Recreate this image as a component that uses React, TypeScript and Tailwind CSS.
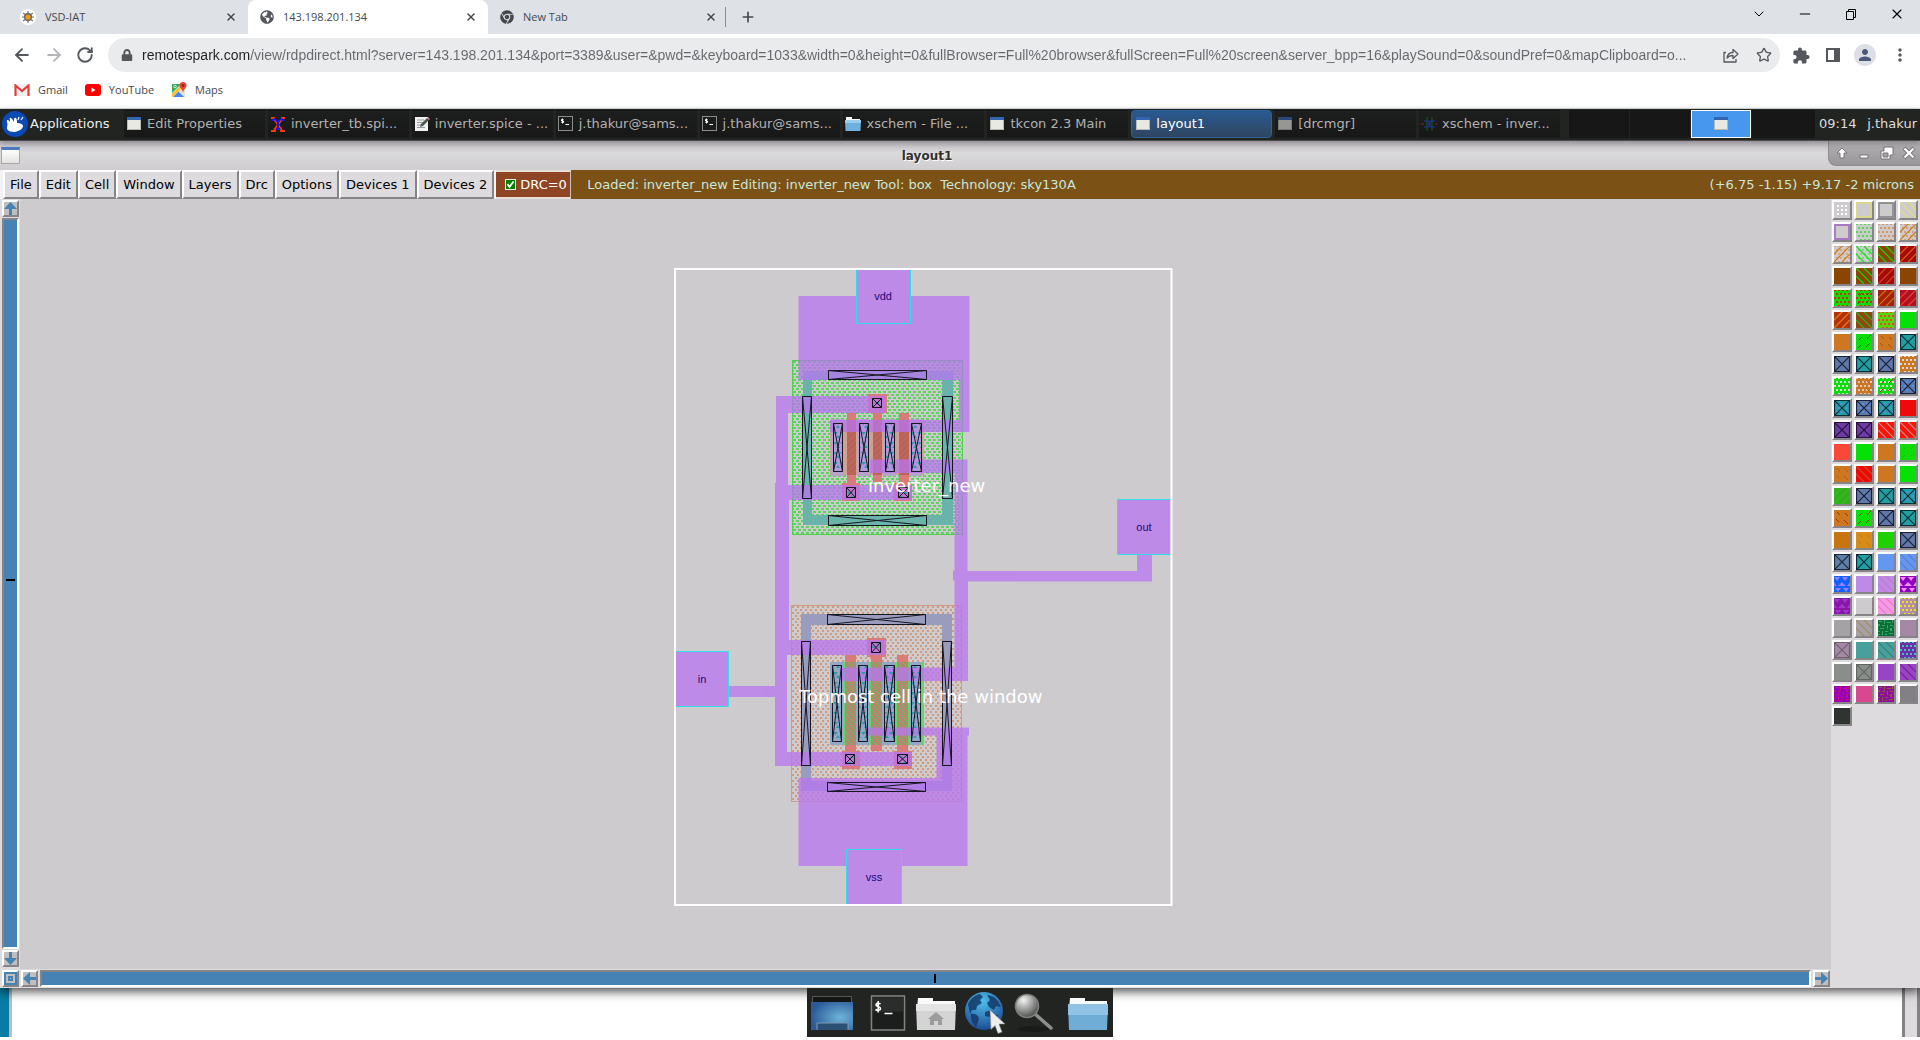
import React from "react";
import { X, Plus, ArrowLeft, ArrowRight, RotateCw, ChevronDown, Star, Minus } from "lucide-react";
import { FaChrome, FaGlobeAmericas, FaLock } from "react-icons/fa";
import { MdMoreVert, MdPerson } from "react-icons/md";

const URL_TEXT =
  "remotespark.com/view/rdpdirect.html?server=143.198.201.134&port=3389&user=&pwd=&keyboard=1033&width=0&height=0&fullBrowser=Full%20browser&fullScreen=Full%20screen&server_bpp=16&playSound=0&soundPref=0&mapClipboard=o...";

/* ---------- Browser ---------- */

function BugIcon() {
  return (
    <svg viewBox="0 0 16 16" className="size-4">
      <circle cx="8" cy="8" r="8" fill="#fff" />
      <path d="M3 4l3 2M13 4l-3 2M2 8h3M14 8h-3M3 12l3-2M13 12l-3-2M8 2v2M8 14v-2" stroke="#7a7468" strokeWidth="1.2" />
      <circle cx="8" cy="8" r="4.200" fill="#6b6a66" />
      <circle cx="8" cy="8" r="2.6" fill="#f09a1c" />
    </svg>
  );
}

function Tab({ icon, title, active }: { icon: React.ReactNode; title: string; active?: boolean }) {
  return (
    <div
      className={
        active
          ? "flex h-full w-60 items-center gap-[9px] rounded-t-lg bg-white pl-3 pr-[9px] text-[#45494d]"
          : "flex h-full w-60 items-center gap-[9px] pl-3 pr-[9px] text-[#45494d]"
      }
    >
      {icon}
      <button className="flex-1 truncate text-left text-[11px]">{title}</button>
      <button aria-label={"Close " + title} className="flex size-4 items-center justify-center">
        <X className="size-3" strokeWidth={3} />
      </button>
    </div>
  );
}

function Browser() {
  return (
    <header className="bg-white font-['Open_Sans',sans-serif] text-[#45494d]">
      <div className="flex h-[34px] items-center bg-[#dee1e6] pl-2">
        <Tab icon={<BugIcon />} title="VSD-IAT" />
        <Tab active icon={<FaGlobeAmericas className="size-[14px] text-[#54585d]" />} title="143.198.201.134" />
        <Tab icon={<FaChrome className="size-[14px] text-[#45494d]" />} title="New Tab" />
        <div className="-ml-[3px] h-5 w-px bg-[#8a8d91]" />
        <button aria-label="New tab" className="ml-3 flex size-5 items-center justify-center">
          <Plus className="size-4" strokeWidth={2.5} />
        </button>
        <div className="ml-auto flex h-full items-center gap-[30px] pb-[6px] pr-[15px] text-black">
          <button aria-label="Search tabs"><ChevronDown className="size-4" strokeWidth={1.5} /></button>
          <button aria-label="Minimize">
            <Minus className="size-4" strokeWidth={1.8} />
          </button>
          <button aria-label="Restore">
            <svg viewBox="0 0 16 16" className="size-4" fill="none" stroke="#000">
              <path d="M3.500 5.500h7v8h-7zM5.500 5v-1.500h7v8h-1.500" />
            </svg>
          </button>
          <button aria-label="Close"><X className="size-4" strokeWidth={1.6} /></button>
        </div>
      </div>
      <div className="flex h-[42px] items-center pl-3 pr-[10px]">
        <div className="flex w-24 items-center gap-3 text-[#54585d]">
          <button aria-label="Back"><ArrowLeft className="size-5" strokeWidth={2.3} /></button>
          <button aria-label="Forward" className="text-[#b4b6b9]"><ArrowRight className="size-5" strokeWidth={2.3} /></button>
          <button aria-label="Reload"><RotateCw className="size-[18px]" strokeWidth={2.5} /></button>
        </div>
        <div className="flex h-[34px] flex-1 items-center rounded-full bg-[#e9ebed] pl-[13px] pr-2">
          <FaLock className="size-3 shrink-0 text-[#54585d]" />
          <input
            aria-label="Address"
            readOnly
            value={URL_TEXT}
            className="ml-[9px] min-w-0 flex-1 bg-[linear-gradient(90deg,#202124_108px,#64686c_108px)] bg-clip-text font-['Liberation_Sans',sans-serif] text-[14px] text-transparent outline-none"
          />
          <div className="flex items-center gap-4 text-[#54585d]">
            <button aria-label="Share">
              <svg viewBox="0 0 18 18" className="size-[18px]" fill="none" stroke="currentColor" strokeWidth="1.3">
                <path d="M4 6.500H2v9.500h12v-3M5 12c.5-4 3-5.500 6-5.500V3.500l5 4.500-5 4.500V9.500c-3 0-4.500.5-6 2.500z" strokeLinejoin="round" />
              </svg>
            </button>
            <button aria-label="Bookmark"><Star className="size-4" strokeWidth={2} /></button>
          </div>
        </div>
        <div className="ml-[13px] flex items-center gap-[14px] text-[#54585d]">
          <button aria-label="Extensions">
            <svg viewBox="0 0 22 22" className="size-[17px]" fill="currentColor">
              <path d="M19 10.500h-1.500v-4c0-1.100-.9-2-2-2h-4V3a2.500 2.500 0 0 0-5 0v1.500h-4c-1.100 0-2 .9-2 2v3.800H2a2.700 2.700 0 0 1 0 5.400H.5v3.800c0 1.100.9 2 2 2h3.800V20a2.700 2.700 0 0 1 5.400 0v1.500h3.800c1.100 0 2-.9 2-2v-4H19a2.500 2.500 0 0 0 0-5z" />
            </svg>
          </button>
          <button aria-label="Side panel" className="ml-[2px] flex h-[14px] w-[14px] border-2 border-[#54585d]">
            <span className="ml-auto h-full w-1 bg-[#54585d]" />
          </button>
          <button aria-label="Profile" className="flex size-[22px] items-center justify-center rounded-full bg-[#dcdfe5] text-[#4a5a78]">
            <MdPerson className="size-[18px]" />
          </button>
          <button aria-label="Menu"><MdMoreVert className="size-5" /></button>
        </div>
      </div>
      <nav aria-label="Bookmarks" className="flex h-[33px] items-center gap-[17px] border-b border-[#d5dede] pb-1 pl-[14px] text-[11px]">
        <a href="#gmail" className="flex items-center gap-2">
          <svg viewBox="0 0 16 12" className="h-3 w-4">
            <rect x="1" width="14" height="12" rx="1" fill="#f1efef" />
            <path d="M1.500 12V1.500L8 7l6.500-5.500V12" fill="none" stroke="#dd4038" strokeWidth="2.200" />
          </svg>
          Gmail
        </a>
        <a href="#youtube" className="flex items-center gap-2">
          <svg viewBox="0 0 16 12" className="h-3 w-4"><rect width="16" height="12" rx="3" fill="#f00" /><path d="M6.500 3.500v5l4-2.500z" fill="#fff" /></svg>
          YouTube
        </a>
        <a href="#maps" className="flex items-center gap-2">
          <svg viewBox="0 0 16 16" className="size-4">
            <path d="M1 2h13v13H1z" fill="#e3e3e3" />
            <path d="M1 2h9L1 11z" fill="#34a853" />
            <path d="M2 15l5.500-5.500L13 15z" fill="#4285f4" />
            <path d="M1 12l9-9 1 3-9 9H1z" fill="#fbc02d" />
            <circle cx="4" cy="4.500" r="1.300" fill="none" stroke="#fff" strokeWidth=".8" />
            <path d="M12 0a3.500 3.500 0 0 1 3.500 3.500C15.500 6 12.500 7 12 11c-.5-4-3.500-5-3.500-7.500A3.500 3.500 0 0 1 12 0z" fill="#ea4335" />
            <circle cx="12" cy="3.500" r="1.300" fill="#8c1d18" />
          </svg>
          Maps
        </a>
      </nav>
    </header>
  );
}

/* ---------- Desktop panel ---------- */

function WindowIcon({ dim }: { dim?: boolean }) {
  return (
    <svg viewBox="0 0 14 13" className={dim ? "h-[13px] w-[14px] shrink-0 opacity-60" : "h-[13px] w-[14px] shrink-0"}>
      <rect width="14" height="13" fill="#e9e9e4" />
      <rect width="14" height="3" fill="#3465b0" />
      <path d="M.5 3v9.500h13V3" fill="none" stroke="#b9b9b4" />
    </svg>
  );
}

function TerminalIcon() {
  return (
    <svg viewBox="0 0 15 15" className="size-[15px] shrink-0">
      <rect x=".5" y=".5" width="14" height="14" fill="#1a1c1b" stroke="#8b8d8b" />
      <path d="M5.500 3.500H3.500v1.500h2v1.500h-2M4.500 2.500v5M7.500 8.500h3.500" stroke="#fff" fill="none" />
    </svg>
  );
}

function FolderIcon() {
  return (
    <svg viewBox="0 0 16 14" className="h-[14px] w-4 shrink-0">
      <path d="M1 0h6v2h8v3H1z" fill="#f4f6f8" />
      <path d="M0 3h16l-.5 11H.5z" fill="#6fb0dc" />
      <path d="M0 3h16v3H0z" fill="#9ccbec" />
    </svg>
  );
}

function XtermIcon() {
  return (
    <svg viewBox="0 0 16 16" className="size-4 shrink-0" strokeWidth="2" fill="none">
      <path d="M3 2l9 12M13 2L4 14M1 15h5M10 15h5M1 2h4M11 2h4" stroke="#f63a08" />
      <path d="M2 5c1-2 3-2 4-1M14 5c-1-2-3-2-4-1M8 4v9M6 13h4M6 5h4" stroke="#1414f0" />
    </svg>
  );
}

function EditorIcon() {
  return (
    <svg viewBox="0 0 16 16" className="size-4 shrink-0">
      <rect x="1" y="1" width="13" height="14" fill="#f1f1ef" />
      <path d="M3 4h7M3 6.500h7M3 9h4M3 11.500h8" stroke="#99a" />
      <path d="M6 11l1-3 6-6 2 2-6 6z" fill="#4c5a4c" />
      <path d="M13 2l1-1 2 2-1 1z" fill="#f070a0" />
    </svg>
  );
}

function SchemIcon() {
  return (
    <svg viewBox="0 0 16 16" className="size-4 shrink-0" fill="none">
      <path d="M6 1v14M11 1v14" stroke="#1b5c26" />
      <path d="M3 5h5v6H3M9 5h5M9 11h5M9 5v6" stroke="#203890" />
      <path d="M0 8h3M14 8h2" stroke="#902020" />
    </svg>
  );
}

const TASKS: { icon: React.ReactNode; title: string; active?: boolean }[] = [
  { icon: <WindowIcon />, title: "Edit Properties" },
  { icon: <XtermIcon />, title: "inverter_tb.spi..." },
  { icon: <EditorIcon />, title: "inverter.spice - ..." },
  { icon: <TerminalIcon />, title: "j.thakur@sams..." },
  { icon: <TerminalIcon />, title: "j.thakur@sams..." },
  { icon: <FolderIcon />, title: "xschem - File ..." },
  { icon: <WindowIcon />, title: "tkcon 2.3 Main" },
  { icon: <WindowIcon />, title: "layout1", active: true },
  { icon: <WindowIcon dim />, title: "[drcmgr]" },
  { icon: <SchemIcon />, title: "xschem - inver..." },
];

function Panel() {
  return (
    <div className="relative flex h-8 items-center border-b border-[#4c4c4c] bg-[#222422] pb-[2px] text-[13px] text-[#b2b2b2] shadow-[0_2px_6px_rgba(80,70,80,0.5)]">
      <button className="flex w-[124px] items-center gap-[2px] pl-[2px] text-[#eee]">
        <svg viewBox="0 0 26 26" className="size-[26px]">
          <circle cx="13" cy="13" r="13" fill="#0b49b4" />
          <path d="M5 11c-1-3 2-2 3 0 0-3-1-5 1-4s2 3 3 4c0-3 0-5 2-4 1 1 1 3 1 5 3 0 6 1 6 3 0 3-4 5-8 6-4 0-8-1-8-4 0-2 1-4 0-6z" fill="#fff" />
          <path d="M16 9l1-3M19 9l2-3" stroke="#fff" strokeWidth="1.200" />
        </svg>
        Applications
      </button>
      <div className="grid h-7 min-w-0 flex-1 grid-cols-10 gap-[3px]">
        {TASKS.map((t, i) => (
          <button
            key={i}
            className={
              t.active
                ? "flex min-w-0 items-center gap-[5px] rounded-sm border border-[#2f6096] bg-linear-to-b from-[#285a92] to-[#2f4560] pl-[3px] text-white"
                : "flex min-w-0 items-center gap-[5px] border border-transparent bg-linear-to-b from-[#1d1f1e] to-[#171717] pl-px"
            }
          >
            <span className="flex w-4 shrink-0 justify-center">{t.icon}</span>
            <span className="whitespace-nowrap">{t.title}</span>
          </button>
        ))}
      </div>
      <div className="ml-[9px] flex h-7 gap-px">
        <button aria-label="Workspace 1" className="w-[60px] bg-[#171717]" />
        <button aria-label="Workspace 2" className="w-[60px] bg-[#171717]" />
        <button aria-label="Workspace 3" className="flex w-[60px] items-center justify-center border border-white bg-[#4797ef]">
          <WindowIcon />
        </button>
        <button aria-label="Workspace 4" className="w-[63px] bg-[#171717]" />
      </div>
      <div className="flex h-full w-[105px] items-center justify-between pl-1 pr-[3px] text-[#ddd]">
        <time>09:14</time>
        <span>j.thakur</span>
      </div>
    </div>
  );
}

/* ---------- Layout window ---------- */

function TitleBar() {
  return (
    <div className="flex h-[29px] items-start bg-linear-to-b from-[#c2c0c4] via-[#dad9db] via-40% to-[#cfcdcf]">
      <button aria-label="Window menu" className="mt-[6px] ml-px h-[17px] w-[19px] border border-[#a9a9a9] border-t-[3px] border-t-[#4f7cc0] bg-linear-to-b from-white to-[#e2e2de]" />
      <h1 className="flex-1 pl-[6px] pt-[7px] text-center text-[12px] leading-4 font-bold text-[#303030] [text-shadow:1px_1px_0_#fff]">layout1</h1>
      <div className="flex h-[25px] w-[92px] items-center justify-between rounded-bl-lg border-b border-l border-[#8d8d8d] bg-linear-to-b from-[#b5b3b5] to-[#989698] pl-[6px] pr-1">
        <button aria-label="Shade">
          <svg viewBox="0 0 14 14" className="size-[14px]"><path d="M7 2l5 5H9v5H5V7H2z" fill="#fff" stroke="#777" /></svg>
        </button>
        <button aria-label="Minimize">
          <svg viewBox="0 0 14 14" className="size-[14px]"><path d="M3 9h8v3H3z" fill="#fff" stroke="#777" /></svg>
        </button>
        <button aria-label="Maximize">
          <svg viewBox="0 0 14 14" className="size-[14px]"><path d="M4 1h9v8h-3v4H1V5h3zM3 7v4h5V7z" fill="#fff" fillRule="evenodd" stroke="#777" /></svg>
        </button>
        <button aria-label="Close">
          <svg viewBox="0 0 14 14" className="size-[14px]"><path d="M2 2l10 10M12 2L2 12" stroke="#777" strokeWidth="4" /><path d="M2.500 2.500l9 9M11.500 2.500l-9 9" stroke="#fff" strokeWidth="2.200" /></svg>
        </button>
      </div>
    </div>
  );
}

const MENUS = ["File", "Edit", "Cell", "Window", "Layers", "Drc", "Options", "Devices 1", "Devices 2"];

function MenuBar() {
  return (
    <div className="flex h-[29px] items-stretch bg-[#7b5115] pr-[6px] text-[13px] text-black">
      <div className="flex bg-[#f4f3f4] pr-[2px] pl-[3px]">
        {MENUS.map((m) => (
          <button key={m} className="whitespace-nowrap border-2 border-t-white border-r-[#868486] border-b-[#868486] border-l-white bg-[#dddbde] px-[5px]">
            {m}
          </button>
        ))}
      </div>
      <label className="flex w-[75px] shrink-0 items-center gap-1 border-2 border-r border-l-0 border-[#eadfd8] border-r-[#cfc3b8] bg-[#8e4523] pl-[9px] text-white">
        <span className="relative flex size-[11px] shrink-0">
          <input type="checkbox" defaultChecked className="size-[11px] appearance-none border border-[#e8e8e8] bg-[#008200]" />
          <svg viewBox="0 0 11 11" className="pointer-events-none absolute inset-0 size-[11px]"><path d="M2.500 5l2 3 4-5.500" fill="none" stroke="#fff" strokeWidth="1.800" /></svg>
        </span>
        DRC=0
      </label>
      <p className="flex flex-1 items-center pl-4 whitespace-pre text-[#c9e6dc]">Loaded: inverter_new Editing: inverter_new Tool: box  Technology: sky130A</p>
      <p className="flex items-center text-[#c9e6dc]">(+6.75 -1.15) +9.17 -2 microns</p>
    </div>
  );
}

function ScrollButton({ label, d }: { label: string; d: string }) {
  return (
    <button aria-label={label} className="size-[17px] shrink-0 border-2 border-t-white border-r-[#868486] border-b-[#868486] border-l-white bg-[#c0bebf]">
      <svg viewBox="0 0 13 13" className="size-[13px]" fill="#4682b4"><path d={d} fillRule="evenodd" /></svg>
    </button>
  );
}

/* Boxes crossed corner to corner: [x, y, width, height] */
type Box = [number, number, number, number];

const UPPER_TAPS: Box[] = [[828, 370, 98, 9], [828, 515, 98, 10], [802, 396, 9, 102], [942, 396, 10, 102]];
const LOWER_TAPS: Box[] = [[827, 614, 98, 10], [827, 782, 98, 9], [801, 641, 9, 124], [942, 641, 9, 124]];
const UPPER_CUTS: Box[] = [[833, 423, 9, 48], [859, 423, 9, 48], [885, 423, 9, 48], [911, 423, 10, 48]];
const LOWER_CUTS: Box[] = [[832, 665, 9, 76], [858, 665, 9, 76], [884, 665, 10, 76], [911, 665, 9, 76]];
const GATE_CUTS: Box[] = [[872, 398, 9, 9], [846, 487, 9, 10], [898, 487, 10, 10], [871, 642, 9, 10], [845, 754, 9, 9], [897, 754, 10, 9]];

function Crossed({ box: [x, y, w, h] }: { box: Box }) {
  return (
    <path
      d={`M${x + 0.5} ${y + 0.5}h${w}v${h}h${-w}zl${w} ${h}m0 ${-h}l${-w} ${h}`}
      fill="none"
      stroke="#161620"
      strokeWidth="1"
    />
  );
}

const PINS = [
  { name: "vdd", x: 856.5, y: 270, w: 54, h: 53.5, tx: 883, ty: 300, d: "M856.500 270v53.500h54V270" },
  { name: "out", x: 1117.5, y: 499.5, w: 53, h: 55, tx: 1144, ty: 531, d: "M1171 499.500h-53.500v55H1171" },
  { name: "in", x: 676, y: 651.5, w: 52.5, h: 55, tx: 702, ty: 683, d: "M676 651.500h52.500v55H676" },
  { name: "vss", x: 846.5, y: 849.5, w: 55, h: 55, tx: 874, ty: 881, d: "M846.500 904v-54.500h55V904" },
];

function Drawing() {
  return (
    <svg viewBox="674 268 503 638" className="h-[638px] w-[503px] shrink-0" role="img" aria-label="inverter_new layout">
      <defs>
        <pattern id="well" x="793" y="361" width="5" height="6" patternUnits="userSpaceOnUse" shapeRendering="crispEdges">
          <path d="M0 0h3v2H0zM3 3h2v2H3zM0 3h1v2H0z" fill="#5ad45c" />
        </pattern>
        <pattern id="sub" x="792" y="606" width="5" height="6" patternUnits="userSpaceOnUse" shapeRendering="crispEdges">
          <path d="M0 0h2v2H0zM3 3h2v2H3z" fill="#cf9c80" />
        </pattern>
        <pattern id="gateP" width="6" height="6" patternUnits="userSpaceOnUse"><path d="M0 6L6 0" stroke="#c07850" strokeWidth=".8" /></pattern>
        <pattern id="gateN" width="6" height="6" patternUnits="userSpaceOnUse"><path d="M0 0L6 6" stroke="#5fc850" strokeWidth=".8" /></pattern>
        <pattern id="cut" width="7" height="10" patternUnits="userSpaceOnUse"><path d="M0 2h5l-2.500 3zM3 8h4L5 5z" fill="#2f9aa8" /></pattern>
      </defs>

      {/* wells */}
      <rect x="792.500" y="360.500" width="170" height="174" fill="url(#well)" stroke="#4fd052" />
      <rect x="791.500" y="605.500" width="170" height="196" fill="url(#sub)" stroke="#cf9c82" />

      {/* guard rings */}
      <path fillRule="evenodd" fill="#69b3ab" d="M803 371h150v154H803zM812 380v135h130V380z" />
      <path fillRule="evenodd" fill="#9a9cbe" d="M801 614h151v177H801zM811 625v156h131V625z" />

      {/* diffusion */}
      <rect x="830" y="420" width="94" height="55" fill="#cfa093" />
      <rect x="830" y="662" width="94" height="83" fill="#5fd865" />
      {UPPER_CUTS.map(([x], i) => <rect key={i} x={x - 2} y="419" width="13" height="57" fill="#b5a3cc" />)}
      {LOWER_CUTS.map(([x], i) => <rect key={i} x={x - 2} y="662" width="13" height="83" fill="#93a7c6" />)}

      {/* polysilicon */}
      <g fill="#d97c79">
        <path d="M847 413h9v72h-9zM873 411h9v71h-9zM899 413h10v72h-10zM868 394h19v19h-19zM842 483h18v18h-18zM894 483h18v18h-18z" />
        <path d="M845 655h11v97h-11zM871 655h11v96h-11zM897 655h11v97h-11zM867 638h19v19h-19zM842 751h18v18h-18zM894 751h18v18h-18z" />
      </g>
      <path d="M847 420h9v55h-9zM873 420h9v55h-9zM899 420h10v55h-10z" fill="#b8625c" />
      <path d="M847 420h9v55h-9zM873 420h9v55h-9zM899 420h10v55h-10z" fill="url(#gateP)" />
      <path d="M845 662h11v83h-11zM871 662h11v83h-11zM897 662h11v83h-11z" fill="#b08a70" />
      <path d="M845 662h11v83h-11zM871 662h11v83h-11zM897 662h11v83h-11z" fill="url(#gateN)" />

      {/* metal */}
      <g fill="#b875f1" opacity="0.750">
        <path d="M798.500 296H969.500v136H830v-12h129v-40H798.500z" />
        <path d="M776 396h110v17h-98v72h124v15h-123v140h96v15h-98v97h125v14H775V483h1z" />
        <path d="M870 459.500h97.500V571H1137v-17h15v27.500H968v99.500H840v-13.500h114.500v-87H953v-10h1.500V473H870z" />
        <path d="M868 727.500h101v8h-1.500V866H798.500v-88h138v-42.500H868z" />
        <rect x="728" y="686" width="47" height="11" />
      </g>

      {/* contacts */}
      <g fill="#b397dd" fillOpacity="0.800">
        {UPPER_CUTS.map(([x, y, w, h], i) => <rect key={i} x={x} y={y} width={w} height={h} />)}
      </g>
      {[...UPPER_CUTS, ...LOWER_CUTS, ...GATE_CUTS].map(([x, y, w, h], i) => (
        <rect key={i} x={x} y={y} width={w} height={h} fill="url(#cut)" />
      ))}
      {[...UPPER_TAPS, ...LOWER_TAPS].map((b, i) => <Crossed key={i} box={b} />)}
      {[...UPPER_CUTS, ...LOWER_CUTS, ...GATE_CUTS].map((b, i) => <Crossed key={i} box={b} />)}

      {/* pins */}
      {PINS.map((p) => (
        <g key={p.name}>
          <rect x={p.x} y={p.y} width={p.w} height={p.h} fill="#bd8ae8" />
          <path d={p.d} fill="none" stroke="#2fdfe8" />
          <text x={p.tx} y={p.ty} textAnchor="middle" className="fill-[#18087a] font-['Liberation_Sans',sans-serif] text-[11px]">{p.name}</text>
        </g>
      ))}

      <rect x="675" y="269" width="496.500" height="636" fill="none" stroke="#fff" strokeWidth="2" />
      <text x="868" y="492" className="fill-white text-[18px]">inverter_new</text>
      <text x="799" y="703" className="fill-white text-[18px]">Topmost cell in the window</text>
    </svg>
  );
}

/* ---------- Layer palette ---------- */

const GRAY = "#cdcbcd";
const BROWN = "#8b4500";
const GREEN = "#06e006";
const ORANGE = "#cd7820";
const TEAL = "#20a0a0";
const SLATE = "#6078a8";

type Mark = "dots" | "frame" | "slash" | "back" | "dash" | "backdash" | "cross" | "tri" | "noise";
type Swatch = { bg: string; marks?: [Mark, string][] };
const s = (bg: string, ...marks: [Mark, string][]): Swatch => ({ bg, marks });

const MARKS: Record<Mark, { d: string; fill?: boolean; width?: number }> = {
  dots: { d: "M2 3h2v2H2zM6 3h2v2H6zM10 3h2v2h-2zM14 3h2v2h-2zM0 7h2v2H0zM4 7h2v2H4zM8 7h2v2H8zM12 7h2v2h-2zM2 11h2v2H2zM6 11h2v2H6zM10 11h2v2h-2zM14 11h2v2h-2zM0 0h2v1H0zM4 0h2v1H4zM8 0h2v1H8zM12 0h2v1h-2zM4 15h2v1H4zM8 15h2v1H8zM12 15h2v1h-2z", fill: true },
  frame: { d: "M1 1h14v14H1z", width: 1.4 },
  slash: { d: "M0 8L8 0M0 16L16 0M8 16L16 8", width: 1.2 },
  back: { d: "M8 0L16 8M0 0L16 16M0 8L8 16", width: 1.2 },
  dash: { d: "M3 6L6 3M11 5L15 1M2 14L5 11M10 13L14 9", width: 1 },
  backdash: { d: "M3 2L6 5M11 3L14 6M2 9L5 12M10 10L14 14", width: 1 },
  cross: { d: "M0 0L16 16M16 0L0 16M.5.5h15v15H.5z", width: 1.2 },
  tri: { d: "M0 1h6L3 5zM8 1h6l-3 4zM4 10h8L8 6zM0 10V6l3 4zM16 10V6l-3 4zM1 12h6l-3 4zM9 12h6l-3 4z", fill: true },
  noise: { d: "M1 1h3v1H1zM6 0h1v4H6zM9 2h4v1H9zM14 0h1v3h-1zM0 4h2v2H0zM4 5h3v1H4zM9 5h1v4H9zM12 5h3v1h-3zM2 8h4v1H2zM12 8h2v3h-2zM0 11h2v1H0zM4 11h1v4H4zM7 11h3v1H7zM7 14h2v1H7zM11 13h4v1h-4zM0 14h2v1H0zM15 7h1v1h-1z", fill: true },
};

const PALETTE: Swatch[] = [
  s(GRAY), s(GRAY, ["frame", "#dcdc70"]), s(GRAY, ["frame", "#808080"]), s(GRAY, ["back", "#e4e070"]),
  s(GRAY, ["frame", "#9c5cc4"]), s(GRAY, ["dots", "#50d850"]), s(GRAY, ["dots", "#d89860"]), s(GRAY, ["dots", "#d8a070"], ["slash", "#d07818"]),
  s(GRAY, ["dots", "#d8a878"], ["slash", "#d07818"]), s(GRAY, ["dots", "#70e070"], ["back", "#10e010"]), s(BROWN, ["back", "#08e008"]), s("#a80808", ["slash", "#d06818"]),
  s(BROWN), s(BROWN, ["back", "#08e008"]), s("#a80808", ["slash", "#c85018"]), s(BROWN),
  s(GREEN, ["dots", "#f02010"]), s(GREEN, ["dots", "#f02010"], ["dash", "#207010"]), s("#a82008", ["slash", "#c87818"]), s("#b80c20", ["slash", "#d05030"]),
  s("#b83008", ["slash", "#d88818"]), s("#904810", ["back", "#28b818"]), s("#50d810", ["dots", "#f84020"]), s(GREEN),
  s(ORANGE), s(GREEN, ["dash", "#207010"]), s(ORANGE, ["backdash", "#a05010"]), s(TEAL, ["cross", "#082c38"]),
  s(SLATE, ["cross", "#182038"]), s(TEAL, ["cross", "#082c38"]), s(SLATE, ["cross", "#182038"]), s(ORANGE, ["dots", "#dcd8dc"]),
  s(GREEN, ["dots", "#dcd8dc"]), s(ORANGE, ["dots", "#dcc8b8"], ["backdash", "#b06020"]), s(GREEN, ["dots", "#dcd8dc"], ["dash", "#c03010"]), s(SLATE, ["dots", "#5090f0"], ["cross", "#182038"]),
  s(TEAL, ["dots", "#5090e0"], ["cross", "#082c38"]), s(SLATE, ["dots", "#5090f0"], ["cross", "#182038"]), s(TEAL, ["dots", "#5090e0"], ["cross", "#082c38"]), s("#ee0a0a"),
  s("#6c3ca0", ["cross", "#281040"]), s("#6c3ca0", ["cross", "#281040"]), s("#fa1408", ["back", "#c89090"]), s("#fa1408", ["back", "#c89090"]),
  s("#fa4838"), s(GREEN), s(ORANGE), s("#10dc08", ["dash", "#18c008"]),
  s(ORANGE, ["backdash", "#a86018"]), s("#f00808", ["back", "#c85020"]), s(ORANGE), s(GREEN),
  s("#38ac20", ["slash", "#28c818"]), s(SLATE, ["cross", "#182038"]), s(TEAL, ["cross", "#082c38"]), s(TEAL, ["dots", "#4890e0"], ["cross", "#082c38"]),
  s(ORANGE, ["backdash", "#983808"]), s(GREEN, ["dash", "#803008"]), s(SLATE, ["cross", "#182038"]), s(TEAL, ["cross", "#082c38"]),
  s("#c87410"), s("#d88c18", ["backdash", "#c07818"]), s("#20d000"), s(SLATE, ["cross", "#182038"]),
  s("#6080a8", ["cross", "#182838"]), s(TEAL, ["cross", "#082c38"]), s("#6498f0"), s("#6498f0", ["back", "#5880c8"]),
  s("#1060ff", ["tri", "#9080f0"]), s("#bd8ae8"), s("#bd8ae8", ["back", "#c878c0"]), s("#9000c0", ["tri", "#f090f8"]),
  s("#8818a8", ["tri", "#a038d0"]), s(GRAY), s("#f498e8", ["back", "#f078b8"]), s("#b090a8", ["dots", "#f0e020"]),
  s("#a4a2a4"), s("#a4a2a4", ["back", "#a88868"]), s("#087038", ["noise", "#40a060"]), s("#a488a4"),
  s("#a488a4", ["cross", "#706070"]), s("#48a09c"), s("#48a09c", ["back", "#388078"]), s("#6830b0", ["dots", "#50c0a8"]),
  s("#8a8e8a"), s("#8a8e8a", ["cross", "#606460"]), s("#9844c4"), s("#9844c4", ["back", "#782098"]),
  s("#9800b8", ["noise", "#c81078"]), s("#d84890"), s("#901098", ["noise", "#806040"]), s("#828084"),
  s("#303430"),
];

function Palette() {
  return (
    <aside aria-label="Layers" className="w-[89px] shrink-0 bg-[#dddbde] pt-px pl-px">
      <div className="grid w-[86px] grid-cols-4 gap-[2px]">
        {PALETTE.map((sw, i) => (
          <button key={i} aria-label={"Layer " + (i + 1)} className="size-5 border-2 border-t-white border-r-[#868486] border-b-[#868486] border-l-white">
            <svg viewBox="0 0 16 16" className="size-4">
              <rect width="16" height="16" fill={sw.bg} />
              {i === 0 && <path d="M3 4h12M3 8h12M3 12h12" stroke="#fff" strokeWidth="2" strokeDasharray="2 2" />}
              {sw.marks?.map(([m, c], k) =>
                MARKS[m].fill ? (
                  <path key={k} d={MARKS[m].d} fill={c} />
                ) : (
                  <path key={k} d={MARKS[m].d} fill="none" stroke={c} strokeWidth={MARKS[m].width} />
                ),
              )}
            </svg>
          </button>
        ))}
      </div>
    </aside>
  );
}

function LayoutWindow() {
  return (
    <main className="relative flex flex-1 flex-col bg-[#dddbde] shadow-[0_3px_10px_rgba(0,0,0,0.75)]">
      <TitleBar />
      <MenuBar />
      <div className="flex flex-1">
        <div className="flex min-w-0 flex-1 flex-col">
          <div className="flex flex-1">
            <div className="flex w-5 flex-col items-center gap-px pt-px pb-[2px]">
              <ScrollButton label="Scroll up" d="M6.500 0L13 7H8v6H5V7H0z" />
              <div role="scrollbar" aria-label="Vertical" aria-controls="canvas" aria-valuenow={50} className="flex w-[17px] flex-1 items-center justify-center border-2 border-t-[#868486] border-r-white border-b-white border-l-[#868486] bg-[#4682b4] pb-2">
                <div className="h-[2px] w-[9px] bg-black" />
              </div>
              <ScrollButton label="Scroll down" d="M6.500 13L13 6H8V0H5v6H0z" />
            </div>
            <div id="canvas" className="flex min-w-0 flex-1 justify-center bg-[#cdcbce] pt-[69px] pb-[62px]">
              <Drawing />
            </div>
          </div>
          <div className="flex h-[19px] items-center gap-[2px] pr-px pl-[2px]">
            <ScrollButton label="Fit view" d="M0 0h13v13H0zM2 2v9h9V2zM4 4h5v5H4zM6 6v1h1V6z" />
            <ScrollButton label="Scroll left" d="M0 6.500L7 0v5h6v3H7v5z" />
            <div role="scrollbar" aria-label="Horizontal" aria-controls="canvas" aria-valuenow={50} className="flex h-[17px] flex-1 items-center justify-center border-2 border-t-[#868486] border-r-white border-b-white border-l-[#868486] bg-[#4682b4]">
              <div className="ml-[18px] h-[9px] w-[2px] bg-black" />
            </div>
            <ScrollButton label="Scroll right" d="M13 6.500L6 0v5H0v3h6v5z" />
          </div>
        </div>
        <Palette />
      </div>
    </main>
  );
}

/* ---------- Dock ---------- */

function Dock() {
  return (
    <nav aria-label="Dock" className="relative flex h-[49px] w-[306px] items-center gap-[2px] bg-[#222422] pl-1">
      <button aria-label="Show desktop" className="mr-[15px]">
        <svg viewBox="0 0 42 36" className="h-9 w-[42px]">
          <defs><radialGradient id="desk" cx="0.700" cy="0.550" r="0.700"><stop offset="0" stopColor="#6fb4d8" /><stop offset="1" stopColor="#2b5a9a" /></radialGradient></defs>
          <rect x="1.500" y="1.500" width="39" height="8" fill="#151716" stroke="#555" />
          <rect y="7" width="42" height="28" fill="url(#desk)" />
          <path d="M6 35v-7h31v7" fill="#2c4f74" stroke="#7d9ab8" />
        </svg>
      </button>
      <button aria-label="Terminal" className="mr-[7px]">
        <svg viewBox="0 0 36 36" className="size-9">
          <rect x="1.500" y="1" width="33" height="34" fill="#1c1e1d" stroke="#838583" strokeWidth="1.500" />
          <rect x="3" y="2.500" width="30" height="14" fill="#2a2d2b" />
          <path d="M10.500 9C8 7.500 6 8.500 6 10s4.500 1.500 4.500 3.500S7.500 16 5.500 14.500M8.200 6v11.500M14.500 18.500h8" stroke="#fff" strokeWidth="1.600" fill="none" />
        </svg>
      </button>
      <button aria-label="Home folder" className="mr-[6px]">
        <svg viewBox="0 0 42 36" className="h-9 w-[42px]">
          <path d="M3 3h15v3h22v8H2z" fill="#fafafa" />
          <path d="M1 9h40l-1 26H2z" fill="#d4d4d4" /><path d="M1 9h40v7H1z" fill="#e4e4e4" />
          <path d="M21 17l8 7h-2v6h-4v-4h-4v4h-4v-6h-2z" fill="#9c9c9c" />
        </svg>
      </button>
      <button aria-label="Web browser" className="mr-1">
        <svg viewBox="0 0 42 42" className="size-[42px]">
          <defs><radialGradient id="globe" cx="0.450" cy="0.250" r="0.750"><stop offset="0" stopColor="#4fc0ea" /><stop offset="1" stopColor="#1c4c96" /></radialGradient></defs>
          <circle cx="19" cy="19" r="19" fill="url(#globe)" />
          <path d="M3 12c3-6 7-9 12-10l3 3-3 3 2 3-5 3-1 4-4 0-2 4zM6 22c4-1 8 2 8 5l-3 8C8 32 5 27 6 22zM22 3c4 0 8 2 11 6l3 6-5-1-2 4-5-3-2-4 3-3zM20 20c4-2 8-1 9 2l4 1-3 9-4-2-1-5-5-1z" fill="#133a66" opacity="0.850" />
          <path d="M25 18l15 14-6 0 3 8-4 1.500-3-8-4 4z" fill="#eee" stroke="#888" strokeWidth=".6" />
        </svg>
      </button>
      <button aria-label="Search" className="mr-[10px]">
        <svg viewBox="0 0 42 42" className="size-[42px]">
          <defs><radialGradient id="lens" cx="0.350" cy="0.250" r="0.800"><stop offset="0" stopColor="#f4f4f4" /><stop offset="1" stopColor="#464846" /></radialGradient></defs>
          <ellipse cx="20" cy="37" rx="16" ry="3" fill="#191b19" />
          <path d="M22 22L38 36" stroke="#8c8e8c" strokeWidth="3.500" strokeLinecap="round" />
          <circle cx="14" cy="14" r="11.500" fill="url(#lens)" stroke="#7e807e" strokeWidth="1.500" />
        </svg>
      </button>
      <button aria-label="Files">
        <svg viewBox="0 0 42 36" className="h-9 w-[42px]">
          <path d="M3 3h15v3h22v8H2z" fill="#f7f9fb" />
          <path d="M1 9h40l-1 26H2z" fill="#6facd6" /><path d="M1 9h40v11H1z" fill="#8fc2e4" />
        </svg>
      </button>
    </nav>
  );
}

export default function App() {
  return (
    <div className="flex min-h-screen flex-col bg-white pb-[3px] font-['DejaVu_Sans',sans-serif]">
      <Browser />
      <div className="relative z-10"><Panel /></div>
      <div className="flex flex-1 flex-col overflow-hidden">
        <LayoutWindow />
        <div className="flex h-[49px] items-stretch justify-between">
          <div className="w-3 border-r-[3px] border-[#bdbbbd] bg-[#087ca4]" />
          <Dock />
          <div className="-ml-[6px] w-[18px] border-x-[3px] border-[#848284] bg-[#dddbde]" />
        </div>
      </div>
    </div>
  );
}
